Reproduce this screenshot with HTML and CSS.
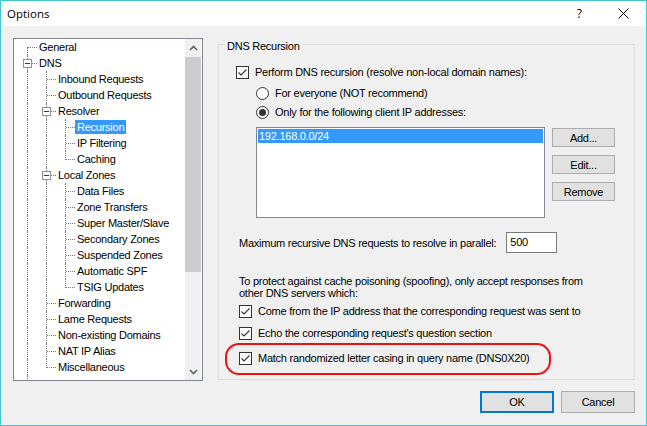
FILE: index.html
```html
<!DOCTYPE html>
<html>
<head>
<meta charset="utf-8">
<link rel="stylesheet" href="styles.css">
</head>
<body>
<div class="window">
  <div class="titlebar">
    <span class="title">Options</span>
    <span class="help">?</span>
    <span class="close"><svg width="11" height="11" viewBox="0 0 11 11"><path d="M0.5 0.5 L10.5 10.5 M10.5 0.5 L0.5 10.5" stroke="#000" stroke-width="1" fill="none"/></svg></span>
  </div>
  <div class="main">
    <div class="tree">
      <div class="items">
        <div class="row"><span class="c f"></span><span class="lbl">General</span></div>
        <div class="row"><span class="c t"><span class="box"></span></span><span class="lbl">DNS</span></div>
        <div class="row"><span class="c v"></span><span class="c t"></span><span class="lbl">Inbound Requests</span></div>
        <div class="row"><span class="c v"></span><span class="c t"></span><span class="lbl">Outbound Requests</span></div>
        <div class="row"><span class="c v"></span><span class="c t"><span class="box"></span></span><span class="lbl">Resolver</span></div>
        <div class="row"><span class="c v"></span><span class="c v"></span><span class="c t"></span><span class="lbl sel">Recursion</span></div>
        <div class="row"><span class="c v"></span><span class="c v"></span><span class="c t"></span><span class="lbl">IP Filtering</span></div>
        <div class="row"><span class="c v"></span><span class="c v"></span><span class="c l"></span><span class="lbl">Caching</span></div>
        <div class="row"><span class="c v"></span><span class="c t"><span class="box"></span></span><span class="lbl">Local Zones</span></div>
        <div class="row"><span class="c v"></span><span class="c v"></span><span class="c t"></span><span class="lbl">Data Files</span></div>
        <div class="row"><span class="c v"></span><span class="c v"></span><span class="c t"></span><span class="lbl">Zone Transfers</span></div>
        <div class="row"><span class="c v"></span><span class="c v"></span><span class="c t"></span><span class="lbl">Super Master/Slave</span></div>
        <div class="row"><span class="c v"></span><span class="c v"></span><span class="c t"></span><span class="lbl">Secondary Zones</span></div>
        <div class="row"><span class="c v"></span><span class="c v"></span><span class="c t"></span><span class="lbl">Suspended Zones</span></div>
        <div class="row"><span class="c v"></span><span class="c v"></span><span class="c t"></span><span class="lbl">Automatic SPF</span></div>
        <div class="row"><span class="c v"></span><span class="c v"></span><span class="c l"></span><span class="lbl">TSIG Updates</span></div>
        <div class="row"><span class="c v"></span><span class="c t"></span><span class="lbl">Forwarding</span></div>
        <div class="row"><span class="c v"></span><span class="c t"></span><span class="lbl">Lame Requests</span></div>
        <div class="row"><span class="c v"></span><span class="c t"></span><span class="lbl">Non-existing Domains</span></div>
        <div class="row"><span class="c v"></span><span class="c t"></span><span class="lbl">NAT IP Alias</span></div>
        <div class="row"><span class="c v"></span><span class="c l"></span><span class="lbl">Miscellaneous</span></div>
        <div class="row"><span class="c v"></span></div>
      </div>
      <div class="vscroll">
        <div class="arrow"><svg width="9" height="6" viewBox="0 0 9 6"><path d="M1 5 L4.5 1.5 L8 5" stroke="#606060" stroke-width="1.6" fill="none"/></svg></div>
        <div class="thumb"></div>
        <div class="track"></div>
        <div class="arrow"><svg width="9" height="6" viewBox="0 0 9 6"><path d="M1 1 L4.5 4.5 L8 1" stroke="#606060" stroke-width="1.6" fill="none"/></svg></div>
      </div>
    </div>
    <div class="group">
      <div class="legend">DNS Recursion</div>
      <div class="opt first">
        <svg class="cb" width="13" height="13" viewBox="0 0 13 13"><rect x="0.5" y="0.5" width="12" height="12" fill="#fff" stroke="#333"/><path d="M2.5 6.5 L5 9 L10.5 3.5" fill="none" stroke="#333" stroke-width="1.1"/></svg>
        <span>Perform DNS recursion (resolve non-local domain names):</span>
      </div>
      <div class="opt radio r1">
        <svg class="cb" width="13" height="13" viewBox="0 0 13 13"><circle cx="6.5" cy="6.5" r="6" fill="#fff" stroke="#333"/></svg>
        <span>For everyone (NOT recommend)</span>
      </div>
      <div class="opt radio r2">
        <svg class="cb" width="13" height="13" viewBox="0 0 13 13"><circle cx="6.5" cy="6.5" r="6" fill="#fff" stroke="#333"/><circle cx="6.5" cy="6.5" r="3.5" fill="#333"/></svg>
        <span>Only for the following client IP addresses:</span>
      </div>
      <div class="listrow">
        <div class="list"><div class="item">192.168.0.0/24</div></div>
        <div class="btncol">
          <button class="btn">Add...</button>
          <button class="btn">Edit...</button>
          <button class="btn">Remove</button>
        </div>
      </div>
      <div class="maxrow">
        <span>Maximum recursive DNS requests to resolve in parallel:</span>
        <span class="input">500</span>
      </div>
      <p class="para">To protect against cache poisoning (spoofing), only accept responses from<br>other DNS servers which:</p>
      <div class="opt sub c1">
        <svg class="cb" width="13" height="13" viewBox="0 0 13 13"><rect x="0.5" y="0.5" width="12" height="12" fill="#fff" stroke="#333"/><path d="M2.5 6.5 L5 9 L10.5 3.5" fill="none" stroke="#333" stroke-width="1.1"/></svg>
        <span>Come from the IP address that the corresponding request was sent to</span>
      </div>
      <div class="opt sub c2">
        <svg class="cb" width="13" height="13" viewBox="0 0 13 13"><rect x="0.5" y="0.5" width="12" height="12" fill="#fff" stroke="#333"/><path d="M2.5 6.5 L5 9 L10.5 3.5" fill="none" stroke="#333" stroke-width="1.1"/></svg>
        <span>Echo the corresponding request's question section</span>
      </div>
      <div class="opt sub c3">
        <svg class="cb" width="13" height="13" viewBox="0 0 13 13"><rect x="0.5" y="0.5" width="12" height="12" fill="#fff" stroke="#333"/><path d="M2.5 6.5 L5 9 L10.5 3.5" fill="none" stroke="#333" stroke-width="1.1"/></svg>
        <span>Match randomized letter casing in query name (DNS0X20)</span>
        <span class="mark"></span>
      </div>
    </div>
  </div>
  <div class="footer">
    <button class="dlg ok">OK</button>
    <button class="dlg">Cancel</button>
  </div>
</div>
</body>
</html>
```
FILE: styles.css
```css
* { box-sizing: border-box; }
html, body { margin: 0; padding: 0; background: #f0f0f0; }
body {
  font-family: "Liberation Sans", Arial, sans-serif;
  font-size: 11px;
  letter-spacing: -0.25px;
  color: #000;
}
.window {
  width: 647px;
  height: 426px;
  border: 1px solid #41c8cc;
  background: #f0f0f0;
  display: flex;
  flex-direction: column;
}
.titlebar {
  height: 25px;
  flex: none;
  background: #fff;
  display: flex;
  align-items: center;
}
.title {
  font-family: "Open Sans", "Liberation Sans", sans-serif;
  font-size: 11.5px;
  letter-spacing: 0;
  padding-left: 6px;
}
.help {
  margin-left: auto;
  font-family: "Open Sans", "Liberation Sans", sans-serif;
  font-size: 12px;
  letter-spacing: 0;
  margin-right: 36px;
}
.close { display: flex; margin-right: 17px; }

.main {
  display: flex;
  padding-left: 12px;
  flex: none;
}
.tree {
  margin-top: 12px;
  width: 190px;
  height: 343px;
  border: 1px solid #828790;
  background: #fff;
  display: flex;
}
.items {
  flex: 1;
  overflow: hidden;
  padding-left: 4px;
}
.row {
  display: flex;
  height: 16px;
}
.c {
  width: 19px;
  height: 16px;
  flex: none;
  position: relative;
}
.c::before, .c::after { content: none; position: absolute; }
.c.v::before, .c.t::before {
  content: "";
  left: 9px; top: 0; bottom: 0;
  border-left: 1px dotted #7a7a7a;
}
.c.l::before {
  content: "";
  left: 9px; top: 0; height: 9px;
  border-left: 1px dotted #7a7a7a;
}
.c.f::before {
  content: "";
  left: 9px; top: 8px; bottom: 0;
  border-left: 1px dotted #7a7a7a;
}
.c.t::after, .c.l::after, .c.f::after {
  content: "";
  left: 10px; top: 8px; width: 9px;
  border-top: 1px dotted #7a7a7a;
}
.box {
  position: absolute;
  left: 5px;
  top: 4px;
  width: 9px;
  height: 9px;
  border: 1px solid #919191;
  background: #fff;
  z-index: 1;
}
.box::after {
  content: "";
  position: absolute;
  left: 1px;
  top: 3px;
  width: 5px;
  height: 1px;
  background: #2b3a55;
}
.lbl {
  height: 14px;
  line-height: 13px;
  padding: 1px 2px 0;
  margin-top: 1px;
  white-space: nowrap;
}
.lbl.sel { background: #3399ff; color: #fff; }

.vscroll {
  width: 16px;
  margin-right: 1px;
  background: #f0f0f0;
  display: flex;
  flex-direction: column;
  flex: none;
}
.arrow {
  height: 17px;
  display: flex;
  align-items: center;
  justify-content: center;
  flex: none;
}
.thumb {
  margin-top: 1px;
  height: 215px;
  background: #cdcdcd;
  flex: none;
}
.track { flex: 1; }

.group {
  margin-top: 18px;
  margin-left: 15px;
  width: 417px;
  height: 336px;
  border: 1px solid #dcdcdc;
  display: flex;
  flex-direction: column;
  align-items: flex-start;
  padding-left: 17px;
}
.legend {
  margin: -6px 0 0 -11px;
  padding: 0 2px;
  line-height: 14px;
  background: #f0f0f0;
}
.opt {
  display: flex;
  align-items: center;
  gap: 6px;
  height: 16px;
  white-space: nowrap;
  position: relative;
}
.cb { flex: none; display: block; }
.opt.first { margin-top: 11px; }
.opt.radio { margin-left: 20px; }
.opt.r1 { margin-top: 5px; }
.opt.r2 { margin-top: 3px; }
.listrow {
  display: flex;
  margin-left: 20px;
  margin-top: 7px;
}
.list {
  width: 289px;
  height: 91px;
  border: 1px solid #828790;
  background: #fff;
  padding: 1px;
}
.item {
  height: 14px;
  line-height: 14px;
  background: #3399ff;
  color: #fff;
  padding-left: 1px;
}
.btncol {
  margin-left: 7px;
  margin-top: 1px;
  display: flex;
  flex-direction: column;
  gap: 8px;
}
.btn, .dlg {
  font-family: "Liberation Sans", Arial, sans-serif;
  font-size: 11px;
  letter-spacing: -0.25px;
  color: #000;
  background: #e1e1e1;
  border: 1px solid #adadad;
  padding: 0;
  margin: 0;
}
.btn { width: 63px; height: 19px; }
.maxrow {
  margin-top: 14px;
  margin-left: 3px;
  height: 21px;
  display: flex;
  align-items: center;
  gap: 10px;
  white-space: nowrap;
}
.input {
  width: 51px;
  height: 21px;
  border: 1px solid #7a7a7a;
  background: #fff;
  line-height: 19px;
  padding-left: 3px;
}
.para {
  margin: 22px 0 0 3px;
  line-height: 12px;
  white-space: nowrap;
}
.opt.sub { margin-left: 3px; }
.opt.c1 { margin-top: 4px; }
.opt.c2 { margin-top: 6px; }
.opt.c3 { margin-top: 9px; }
.mark {
  position: absolute;
  left: -14px;
  top: -7px;
  width: 326px;
  height: 32px;
  border: 2px solid #ee1111;
  border-radius: 14px;
}
.footer {
  margin-top: 10px;
  display: flex;
  justify-content: flex-end;
  gap: 7px;
  padding-right: 11px;
}
.dlg { width: 74px; height: 22px; }
.dlg.ok { border: 2px solid #0078d7; }
```
